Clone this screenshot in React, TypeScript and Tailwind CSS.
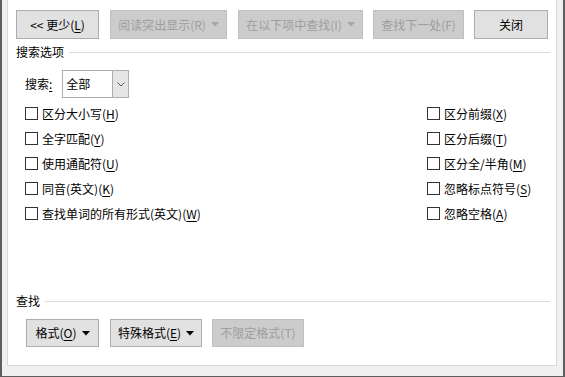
import React from "react";

const font = { fontFamily: '"Noto Sans CJK SC", "Microsoft YaHei", sans-serif' };

function Caret({ disabled }: { disabled?: boolean }) {
  return (
    <svg width="8" height="5" viewBox="0 0 8 5" className="ml-[5px]">
      <path d="M0 0 H8 L4 4.5 Z" fill={disabled ? "#a6a6a6" : "#000"} />
    </svg>
  );
}

function Btn({
  w,
  children,
  disabled,
  caret,
  h = "h-[29px]",
}: {
  w: string;
  children: React.ReactNode;
  disabled?: boolean;
  caret?: boolean;
  h?: string;
}) {
  return (
    <div
      className={`${w} ${h} flex items-center justify-center border text-[12px] leading-none ${
        disabled
          ? "bg-[#cccccc] border-[#bfbfbf] text-[#9e9e9e]"
          : "bg-[#e1e1e1] border-[#adadad] text-black"
      }`}
    >
      <span className="flex items-center">{children}</span>
      {caret && <Caret disabled={disabled} />}
    </div>
  );
}

function U({ c }: { c: string }) {
  return <span className="underline underline-offset-[2px]">{c}</span>;
}

function Check({ label, k, rest }: { label: string; k: string; rest?: string }) {
  return (
    <div className="h-[25px] flex items-center">
      <div className="w-[13px] h-[13px] border border-[#333333] bg-white" />
      <span className="ml-[4px] text-[12px] text-black leading-none">
        {label}(<U c={k} />){rest}
      </span>
    </div>
  );
}

function Section({ title, lineStart }: { title: string; lineStart: string }) {
  return (
    <div className="h-[16px] flex items-center">
      <span className="text-[12px] leading-none text-black">{title}</span>
      <div className={`flex-1 h-px bg-[#dcdcdc] ${lineStart}`} />
    </div>
  );
}

export default function App() {
  return (
    <div
      className="w-[565px] h-[377px] bg-[#f0f0f0] border-l-2 border-r-2 border-b border-[#5e5e5e] flex flex-col overflow-hidden"
      style={font}
    >
      <div className="flex-1 flex flex-col pl-[5px] pr-[6px] pb-[10px]">
        <div className="flex-1 bg-white border-l border-r border-b border-[#d9d9d9] pl-[8px] pr-[6px] flex flex-col">
          {/* Top buttons */}
          <div className="mt-[10px] flex">
            <Btn w="w-[83px]">
              {"<< 更少("}
              <U c="L" />)
            </Btn>
            <div className="ml-[11px]">
              <Btn w="w-[117px]" disabled caret>
                阅读突出显示(R)
              </Btn>
            </div>
            <div className="ml-[11px]">
              <Btn w="w-[125px]" disabled caret>
                在以下项中查找(I)
              </Btn>
            </div>
            <div className="ml-[10px]">
              <Btn w="w-[91px]" disabled>
                查找下一处(F)
              </Btn>
            </div>
            <div className="ml-[10px]">
              <Btn w="w-[74px]">关闭</Btn>
            </div>
          </div>

          <div className="mt-[5px]">
            <Section title="搜索选项" lineStart="ml-[5px]" />
          </div>

          {/* Search select */}
          <div className="mt-[10px] h-[28px] flex items-center pl-[9px]">
            <span className="text-[12px] leading-none text-black">
              搜索<U c=":" />
            </span>
            <div className="ml-[10px] w-[67px] h-[28px] border border-[#adadad] flex bg-white">
              <div className="flex-1 flex items-center pl-[3px] text-[12px] leading-none text-black">
                全部
              </div>
              <div className="w-[16px] bg-[#e5e5e5] border-l border-[#adadad] flex items-center justify-center">
                <svg width="8" height="5" viewBox="0 0 8 5">
                  <path d="M0.5 0.5 L4 4 L7.5 0.5" stroke="#555" strokeWidth="1" fill="none" />
                </svg>
              </div>
            </div>
          </div>

          {/* Checkboxes */}
          <div className="mt-[3px] flex pl-[9px]">
            <div className="w-[402px] flex flex-col">
              <Check label="区分大小写" k="H" />
              <Check label="全字匹配" k="Y" />
              <Check label="使用通配符" k="U" />
              <Check label="同音(英文)" k="K" />
              <Check label="查找单词的所有形式(英文)" k="W" />
            </div>
            <div className="flex flex-col">
              <Check label="区分前缀" k="X" />
              <Check label="区分后缀" k="T" />
              <Check label="区分全/半角" k="M" />
              <Check label="忽略标点符号" k="S" />
              <Check label="忽略空格" k="A" />
            </div>
          </div>

          <div className="mt-[67px]">
            <Section title="查找" lineStart="ml-[5px]" />
          </div>

          {/* Bottom buttons */}
          <div className="mt-[10px] flex pl-[10px]">
            <Btn w="w-[73px]" h="h-[28px]" caret>
              格式(<U c="O" />)
            </Btn>
            <div className="ml-[11px]">
              <Btn w="w-[92px]" h="h-[28px]" caret>
                特殊格式(<U c="E" />)
              </Btn>
            </div>
            <div className="ml-[10px]">
              <Btn w="w-[92px]" h="h-[28px]" disabled>
                不限定格式(T)
              </Btn>
            </div>
          </div>
        </div>
      </div>
    </div>
  );
}
